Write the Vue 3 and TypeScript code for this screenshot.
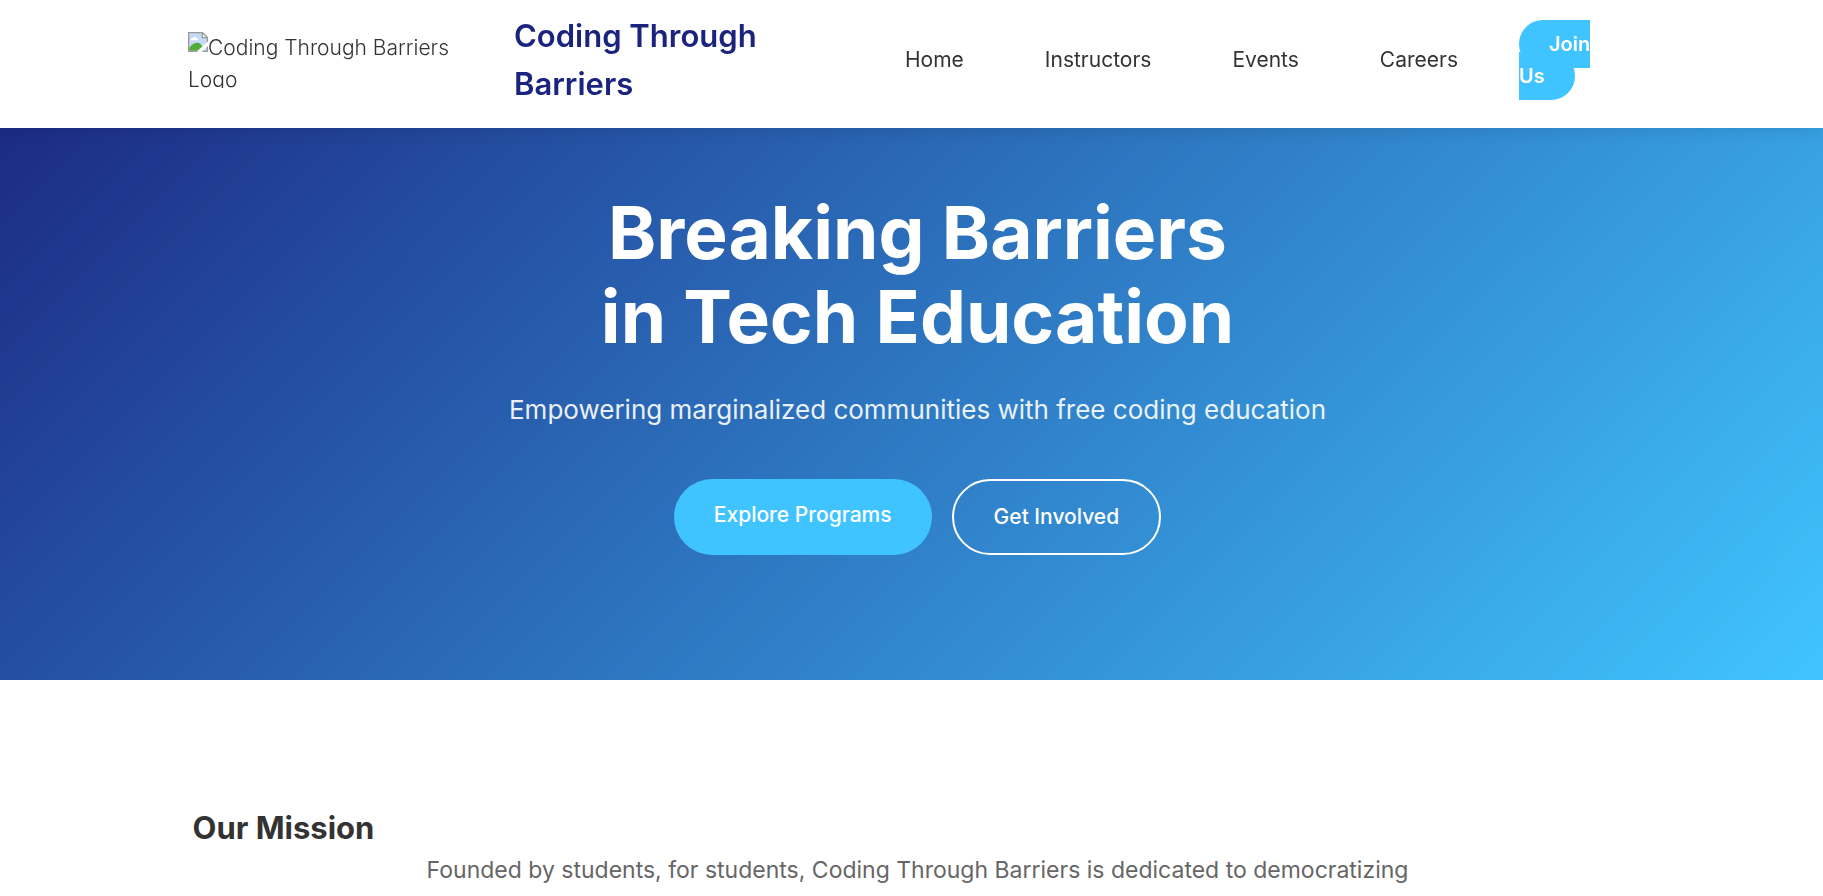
<script setup lang="ts">
interface NavLink {
  label: string
  href: string
}

const links: NavLink[] = [
  { label: 'Home', href: '#home' },
  { label: 'Instructors', href: '#instructors' },
  { label: 'Events', href: '#events' },
  { label: 'Careers', href: '#careers' },
]
</script>

<template>
  <div class="page">
    <header class="header">
      <div class="bar">
        <div class="logo">
          <svg class="logo-icon" width="20" height="20" viewBox="0 0 16 16" aria-hidden="true">
            <path d="M.5.5h11l4 4v11H.5z" fill="#c6d9f7" />
            <path d="M2 6.500c0-1.200 1-1.700 1.800-1.500C4.300 3.600 6.500 3.700 6.800 5c1 0 1.500.700 1.500 1.500z" fill="#fff" />
            <path d="M1 15v-2.500C3 10 5 8.500 7.500 8.500S11 10 12.500 15z" fill="#52ab35" />
            <path d="M6.500 16L16 7.500V11l-5 5z" fill="#fff" />
            <path d="M7.500 15.500H.5V.5h11l4 4V8" fill="none" stroke="#9a9a9a" />
            <path d="M11.500.5v4h4z" fill="#fff" stroke="#9a9a9a" />
            <path d="M15.500 11.500v4h-4" fill="none" stroke="#9a9a9a" />
          </svg>Coding Through Barriers Logo
        </div>
        <a class="brand" href="#home">Coding Through Barriers</a>
        <nav class="nav" aria-label="Main">
          <ul class="links">
            <li v-for="link in links" :key="link.href">
              <a class="link" :href="link.href">{{ link.label }}</a>
            </li>
          </ul>
          <div class="join-wrap"><a class="join" href="#join">Join Us</a></div>
        </nav>
      </div>
    </header>

    <main>
      <section class="hero">
        <h1 class="title">Breaking Barriers<br />in Tech Education</h1>
        <p class="subtitle">Empowering marginalized communities with free coding education</p>
        <div class="actions">
          <a class="button primary" href="#programs">Explore Programs</a>
          <a class="button outline" href="#involved">Get Involved</a>
        </div>
      </section>

      <section class="mission">
        <h2 class="heading">Our Mission</h2>
        <p class="text">Founded by students, for students, Coding Through Barriers is dedicated to democratizing</p>
      </section>
    </main>
  </div>
</template>

<style>
body {
  margin: 0;
  background: #fff;
}
</style>

<style scoped>
.page {
  font-family: Inter, "Open Sans", sans-serif;
  font-size: 20px;
  line-height: 32px;
  color: #333;
}

.header {
  position: fixed;
  top: 0;
  left: 0;
  z-index: 10;
  width: 100%;
  background: #fff;
  box-shadow: 0 2px 15px rgba(0, 0, 0, 0.1);
}

.bar {
  display: flex;
  align-items: center;
  max-width: 1447px;
  margin: 0 auto;
  padding: 12px 43px 20px 0;
  box-sizing: border-box;
}

.logo {
  flex: 0 0 280px;
  height: 56px;
  margin-right: 46px;
  overflow: hidden;
  font-size: 21px;
  font-weight: 300;
}

.logo-icon {
  vertical-align: top;
}

.brand {
  flex: 0 0 280px;
  color: #1a237e;
  font-size: 31px;
  font-weight: 600;
  line-height: 48px;
  text-decoration: none;
}

.nav {
  display: flex;
  flex: 1;
  align-items: center;
  justify-content: flex-end;
  gap: 61px;
}

.links {
  display: flex;
  gap: 81px;
  margin: 0;
  padding: 0;
  list-style: none;
}

.link {
  color: #333;
  font-size: 21px;
  text-decoration: none;
}

.join-wrap {
  width: 73px;
}

.join {
  padding: 12px 30px;
  border-radius: 30px;
  background: #40c4ff;
  color: #fff;
  font-weight: 600;
  text-decoration: none;
}

.hero {
  padding: 191px 0 125px 12px;
  background: linear-gradient(135deg, #1a237e 0%, #40c4ff 100%);
  color: #fff;
  text-align: center;
}

.title {
  margin: 0;
  font-size: 73px;
  font-weight: 700;
  line-height: 84px;
}

.subtitle {
  margin: 30px 0 48px;
  font-size: 26px;
  line-height: 42px;
  opacity: 0.9;
}

.actions {
  display: flex;
  justify-content: center;
  gap: 20px;
}

.button {
  padding: 20px 40px;
  border-radius: 50px;
  color: #fff;
  font-size: 21px;
  font-weight: 500;
  text-decoration: none;
}

.primary {
  background: #40c4ff;
}

.outline {
  border: 2px solid #fff;
}

.mission {
  max-width: 1450px;
  margin: 0 auto;
  padding: 124px 0 0 12px;
}

.heading {
  margin: 0;
  font-size: 31px;
  font-weight: 700;
  line-height: 48px;
}

.text {
  margin: 0;
  color: #666;
  font-size: 23px;
  line-height: 36px;
  text-align: center;
}
</style>
